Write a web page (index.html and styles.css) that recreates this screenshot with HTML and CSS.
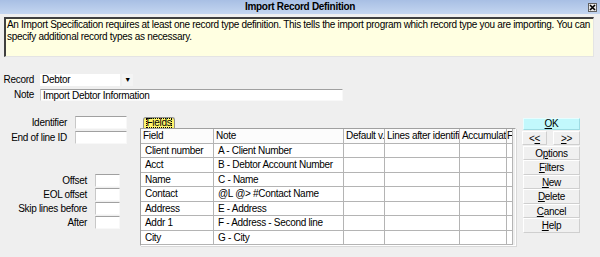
FILE: index.html
```html
<!DOCTYPE html>
<html lang="en">

<head>
    <meta charset="UTF-8">
    <meta name="viewport" content="width=device-width, initial-scale=1.0">
    <title>Import Record Definition</title>
    <link rel="stylesheet" href="styles.css">
</head>

<body>
    <div class="window">
        <div class="titlebar">
            <span></span>
            <span class="title">Import Record Definition</span>
            <span class="close">
                <svg width="9" height="9" viewBox="0 0 9 9">
                    <path d="M2 2 L7 7 M7 2 L2 7" stroke="#000" stroke-width="1.6" />
                </svg>
            </span>
        </div>

        <div class="info">
            An Import Specification requires at least one record type definition. This tells the import program which record type you are importing. You can<br>
            specify additional record types as necessary.
        </div>

        <div class="record-form">
            <label>Record</label>
            <div class="combo">
                <span class="combo-value">Debtor</span>
                <span class="combo-btn">&#9660;</span>
            </div>
            <label>Note</label>
            <div class="textbox note-box">Import Debtor Information</div>
        </div>

        <div class="main">
            <div class="left">
                <div class="ids">
                    <label>Identifier</label>
                    <div class="textbox"></div>
                    <label>End of line ID</label>
                    <div class="textbox"></div>
                </div>
                <div class="offsets">
                    <label>Offset</label>
                    <div class="textbox"></div>
                    <label>EOL offset</label>
                    <div class="textbox"></div>
                    <label>Skip lines before</label>
                    <div class="textbox"></div>
                    <label>After</label>
                    <div class="textbox"></div>
                </div>
            </div>

            <div class="fields">
                <div class="tab"><span>Fields</span></div>
                <div class="grid">
                    <table>
                        <colgroup>
                            <col class="c-field">
                            <col class="c-note">
                            <col class="c-default">
                            <col class="c-lines">
                            <col class="c-accum">
                            <col class="c-fixed">
                        </colgroup>
                        <tr class="head">
                            <td>Field</td>
                            <td>Note</td>
                            <td>Default v.</td>
                            <td>Lines after identifi</td>
                            <td>Accumulat</td>
                            <td class="last">F</td>
                        </tr>
                        <tr><td>Client number</td><td>A - Client Number</td><td></td><td></td><td></td><td></td></tr>
                        <tr><td>Acct</td><td>B - Debtor Account Number</td><td></td><td></td><td></td><td></td></tr>
                        <tr><td>Name</td><td>C - Name</td><td></td><td></td><td></td><td></td></tr>
                        <tr><td>Contact</td><td>@L @&gt; #Contact Name</td><td></td><td></td><td></td><td></td></tr>
                        <tr><td>Address</td><td>E - Address</td><td></td><td></td><td></td><td></td></tr>
                        <tr><td>Addr 1</td><td>F - Address - Second line</td><td></td><td></td><td></td><td></td></tr>
                        <tr><td>City</td><td>G - City</td><td></td><td></td><td></td><td></td></tr>
                    </table>
                </div>
            </div>

            <div class="buttons">
                <button class="ok"><u>O</u>K</button>
                <div class="nav">
                    <button>&lt;<u>&lt;</u></button>
                    <button><u>&gt;</u>&gt;</button>
                </div>
                <button>O<u>p</u>tions</button>
                <button><u>F</u>ilters</button>
                <button><u>N</u>ew</button>
                <button><u>D</u>elete</button>
                <button><u>C</u>ancel</button>
                <button><u>H</u>elp</button>
            </div>
        </div>
    </div>
</body>

</html>
```

FILE: styles.css
```css
*,
*::before,
*::after {
    box-sizing: border-box;
    margin: 0;
    padding: 0;
}

body {
    background-color: #efefef;
    font-family: "Liberation Sans", Arial, sans-serif;
    font-size: 10px;
    letter-spacing: -0.3px;
    color: #000;
}

.window {
    width: 600px;
    height: 257px;
    overflow: hidden;
}

/* title bar */
.titlebar {
    height: 14px;
    display: grid;
    grid-template-columns: 1fr auto 1fr;
    align-items: center;
    background: linear-gradient(#a8bfe4, #c4d6f0);
}

.title {
    font-weight: bold;
    font-size: 10px;
    line-height: 14px;
}

.close {
    justify-self: end;
    width: 9px;
    height: 9px;
    margin-right: 3px;
    background-color: #e8e8e8;
    border: 1px solid #606060;
    display: flex;
}

.close svg {
    margin: -1px;
}

/* yellow help text */
.info {
    margin: 3px 6px 0 4px;
    height: 40px;
    padding: 0 0 0 1px;
    background-color: #ffffe1;
    border-top: 2px solid #404040;
    border-left: 2px solid #404040;
    border-right: 1px solid #e4e4e4;
    border-bottom: 1px solid #e4e4e4;
    line-height: 12px;
    white-space: nowrap;
    overflow: hidden;
}

/* record + note */
.record-form {
    display: grid;
    grid-template-columns: 34px auto;
    justify-content: start;
    column-gap: 6px;
    row-gap: 3px;
    margin-top: 17px;
}

.record-form label {
    text-align: right;
    line-height: 12px;
}

.textbox {
    background-color: #fff;
    border-top: 1px solid #a0a0a0;
    border-left: 1px solid #c8c8c8;
    border-right: 1px solid #f8f8f8;
    border-bottom: 1px solid #f8f8f8;
    height: 13px;
    line-height: 11px;
    padding-left: 2px;
    white-space: nowrap;
}

.combo {
    width: 93px;
    height: 12px;
    display: flex;
}

.combo-value {
    width: 80px;
    background-color: #fff;
    line-height: 12px;
    padding-left: 2px;
}

.combo-btn {
    width: 11px;
    margin-left: 2px;
    background-color: #f4f4f4;
    font-size: 7px;
    line-height: 12px;
    text-align: center;
}

.note-box {
    width: 303px;
    height: 12px;
    line-height: 11px;
}

/* main area */
.main {
    display: flex;
    margin-top: 15px;
}

.left {
    width: 140px;
}

.ids {
    display: grid;
    grid-template-columns: 67px 52px;
    column-gap: 8px;
    row-gap: 2px;
    grid-auto-rows: 13px;
}

.offsets {
    display: grid;
    grid-template-columns: 87px 25px;
    column-gap: 8px;
    row-gap: 1px;
    grid-auto-rows: 13px;
    margin-top: 30px;
}

.left label {
    text-align: right;
    line-height: 13px;
    white-space: nowrap;
}

.fields {
    width: 376px;
    margin-top: 1px;
}

.tab {
    margin-left: 3px;
    width: 32px;
    height: 11px;
    background-color: #fff46c;
    border: 1px solid #909090;
    border-bottom: none;
    border-radius: 3px 3px 0 0;
    display: flex;
    justify-content: center;
}

.tab span {
    line-height: 9px;
    padding: 0 1px;
    outline: 1px dotted #000;
    outline-offset: -1px;
}

.grid {
    height: 118px;
    background-color: #efefef;
    border-top: 1px solid #a0a0a0;
    border-left: 1px solid #a0a0a0;
    border-right: 1px solid #fff;
    border-bottom: 1px solid #fff;
    box-shadow: 1px 1px 0 #d8d8d8;
    overflow: hidden;
}

.grid table {
    border-collapse: separate;
    border-spacing: 0;
    table-layout: fixed;
    width: 372px;
}

.c-field { width: 73px; }
.c-note { width: 130px; }
.c-default { width: 41px; }
.c-lines { width: 75px; }
.c-accum { width: 47px; }
.c-fixed { width: 6px; }

.grid td {
    background-color: #fff;
    border-right: 1px solid #b4b4b4;
    border-bottom: 1px solid #b4b4b4;
    height: 14px;
    padding: 0 0 0 4px;
    white-space: nowrap;
    overflow: hidden;
    text-overflow: clip;
    line-height: 12px;
}

.grid tr:nth-child(odd) td {
    height: 15px;
}

.grid tr.head td {
    background-color: #fcfcfc;
    padding-left: 2px;
}

.grid tr.head td.last {
    padding-left: 0;
    letter-spacing: -1px;
}

/* buttons */
.buttons {
    width: 57px;
    margin-left: 7px;
    margin-top: 2px;
    display: flex;
    flex-direction: column;
}

.buttons button {
    font-family: inherit;
    font-size: 10px;
    letter-spacing: -0.3px;
    color: #000;
    height: 14px;
    line-height: 11px;
    background-color: #f0f0f0;
    border: 1px solid #cfcfcf;
    border-top-color: #fff;
    border-left-color: #fff;
    cursor: pointer;
}

.buttons > button:nth-child(even) {
    height: 15px;
}

.buttons .ok {
    height: 12px;
    line-height: 10px;
    background-color: #c2f8fc;
    border-color: #9edbe2;
    border-top-color: #e6feff;
    border-left-color: #e6feff;
    margin-bottom: 1px;
}

.nav {
    display: flex;
    justify-content: space-between;
    margin: 0 0 1px -1px;
}

.nav button {
    width: 25px;
    height: 14px;
}

.nav button + button {
    width: 27px;
}
```
